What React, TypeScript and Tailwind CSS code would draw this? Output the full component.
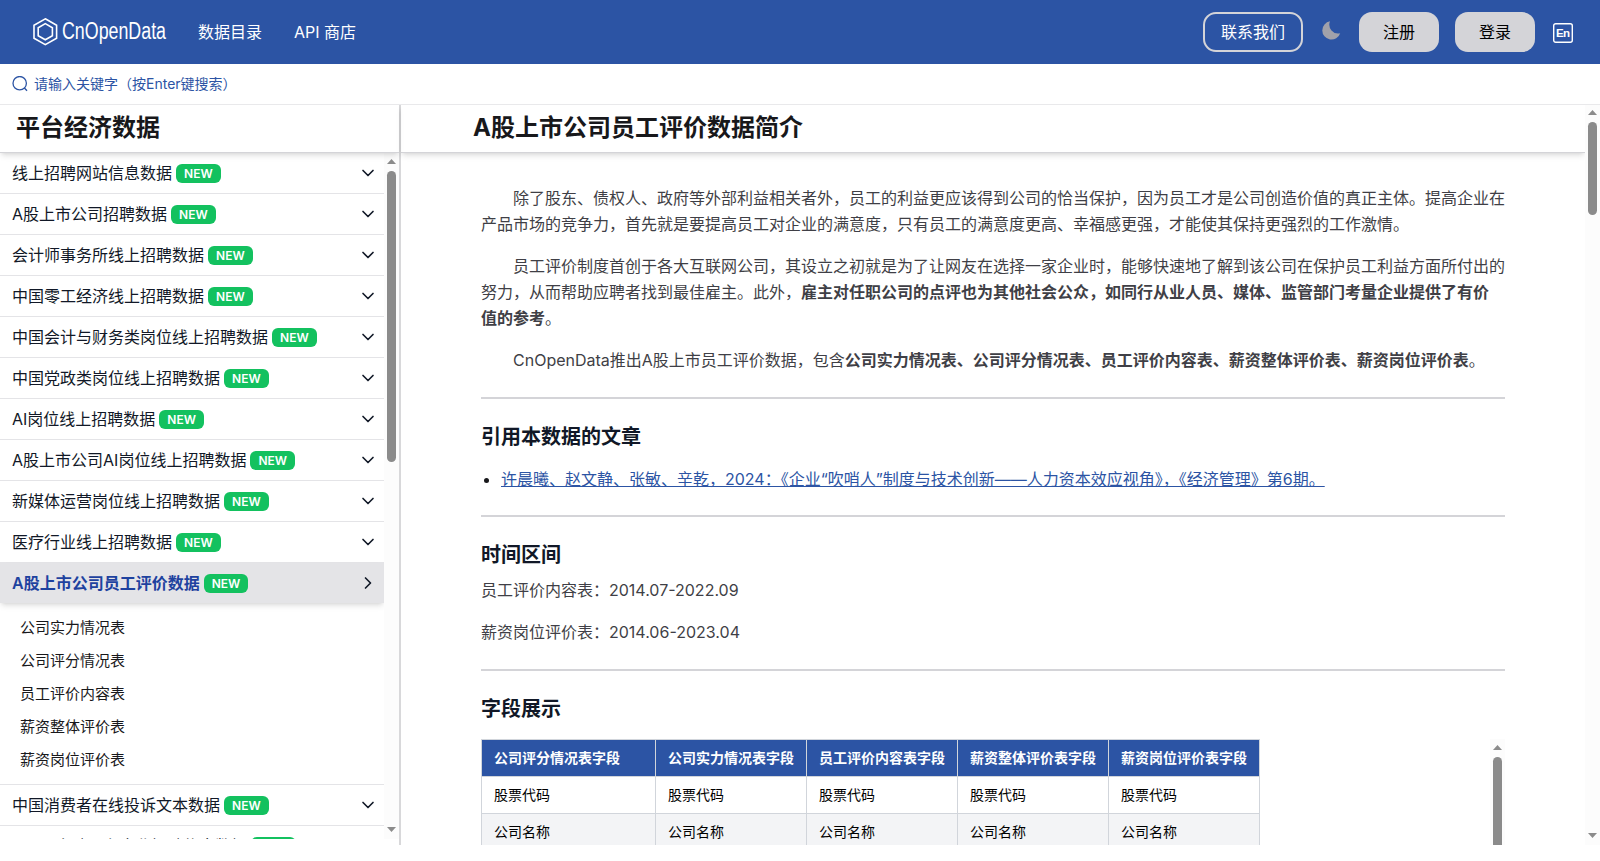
import React from "react";
import { clsx } from "clsx";
import { ChevronDown, ChevronRight } from "lucide-react";

interface Dataset {
  name: string;
  active?: boolean;
  tables?: string[];
}

const datasets: Dataset[] = [
  { name: "线上招聘网站信息数据" },
  { name: "A股上市公司招聘数据" },
  { name: "会计师事务所线上招聘数据" },
  { name: "中国零工经济线上招聘数据" },
  { name: "中国会计与财务类岗位线上招聘数据" },
  { name: "中国党政类岗位线上招聘数据" },
  { name: "AI岗位线上招聘数据" },
  { name: "A股上市公司AI岗位线上招聘数据" },
  { name: "新媒体运营岗位线上招聘数据" },
  { name: "医疗行业线上招聘数据" },
  {
    name: "A股上市公司员工评价数据",
    active: true,
    tables: ["公司实力情况表", "公司评分情况表", "员工评价内容表", "薪资整体评价表", "薪资岗位评价表"],
  },
  { name: "中国消费者在线投诉文本数据" },
  { name: "BOSS直聘平台企业招聘信息数据" },
];

const columns = ["公司评分情况表字段", "公司实力情况表字段", "员工评价内容表字段", "薪资整体评价表字段", "薪资岗位评价表字段"];
const rows = ["股票代码", "公司名称", "统计日期"];

const Logo: React.FC = () => (
  <svg width="136" height="32" viewBox="0 0 136 32" fill="none" aria-label="CnOpenData">
    <g stroke="#fff" strokeWidth="1.6">
      <path d="M13.3 2.8 24.6 9.2V22.2L13.3 28.6 2 22.2V9.2Z" />
      <path d="M13.3 7.6 20.4 11.7V19.7L13.3 23.8 6.2 19.7V11.7Z" />
    </g>
    <text
      x="30"
      y="23.2"
      fill="#fff"
      fontSize="23"
      fontFamily="Liberation Sans, sans-serif"
      textLength="104"
      lengthAdjust="spacingAndGlyphs"
    >
      CnOpenData
    </text>
  </svg>
);

const Scrollbar: React.FC<{ thumb: string; end?: boolean }> = ({ thumb, end = true }) => (
  <div className="flex w-[15px] shrink-0 flex-col items-center bg-[#fcfcfc]">
    <svg width="15" height="18" className="shrink-0" fill="#8b8b8b">
      <path d="M3 11 7.5 6 12 11Z" />
    </svg>
    <div className={clsx("w-[9px] rounded-full bg-[#8b8b8b]", thumb)} />
    {end && (
      <svg width="15" height="18" className="mt-auto shrink-0" fill="#8b8b8b">
        <path d="M3 6 7.5 11 12 6Z" />
      </svg>
    )}
  </div>
);

const Header: React.FC = () => (
  <header className="flex h-16 shrink-0 items-center bg-[#2c54a4] pl-8 pr-[27px] text-white">
    <Logo />
    <nav className="ml-[30px] flex gap-8">
      <a>数据目录</a>
      <a>API 商店</a>
    </nav>
    <div className="ml-auto flex items-center">
      <button className="h-10 w-[100px] rounded-[13px] border-2 border-[#d4d4d8]">联系我们</button>
      <svg width="19" height="19" viewBox="0 0 19 19" className="ml-[19px] -mt-1 fill-[#a1a1aa]">
        <path d="M8 .3A9.2 9.2 0 1 0 18.2 12.3 8.9 8.9 0 0 1 8 .3Z" />
      </svg>
      <button className="ml-[18px] h-10 w-20 rounded-[13px] bg-[#d4d4d8] text-black">注册</button>
      <button className="ml-4 h-10 w-20 rounded-[13px] bg-[#d4d4d8] text-black">登录</button>
      <svg width="20" height="20" viewBox="0 0 20 20" fill="none" className="ml-[18px] mt-px">
        <rect x="0.7" y="0.7" width="18.6" height="18.6" rx="2" stroke="#fff" strokeWidth="1.4" />
        <text x="3" y="14" fill="#fff" fontSize="11.5" fontWeight="700" fontFamily="Liberation Sans, sans-serif" textLength="14">
          En
        </text>
      </svg>
    </div>
  </header>
);

const Badge: React.FC = () => (
  <span className="ml-1 mt-px flex h-[19px] items-center rounded-md bg-[#13c15f] px-2 text-xs font-semibold text-white">NEW</span>
);

const Sidebar: React.FC = () => (
  <aside className="flex w-[401px] shrink-0 flex-col border-r-2 border-[#d8d8da]">
    <h2 className="z-10 h-[49px] shrink-0 border-b border-[#d4d4d8] pl-4 text-2xl leading-[48px] font-bold text-[#18181b] shadow-md">
      平台经济数据
    </h2>
    <div className="flex h-[686px]">
      <ul className="w-96 overflow-hidden">
        {datasets.map((item, i) => (
          <li key={item.name} className={clsx(i > 0 && "border-t border-[#e4e4e7]")}>
            <div
              className={clsx(
                "flex h-10 items-center pl-3 pr-1.5",
                item.active ? "bg-[#e4e4e7] font-semibold text-[#1e429f] shadow-md" : "text-[#111827]"
              )}
            >
              {item.name}
              <Badge />
              {item.active ? (
                <ChevronRight size={20} className="ml-auto text-[#111827]" />
              ) : (
                <ChevronDown size={20} className="ml-auto" />
              )}
            </div>
            {item.tables && (
              <ul className="py-2">
                {item.tables.map((table) => (
                  <li key={table} className="h-[33px] pl-5 text-[15px] leading-[33px] text-[#18181b]">
                    {table}
                  </li>
                ))}
              </ul>
            )}
          </li>
        ))}
      </ul>
      <Scrollbar thumb="h-[291px]" />
    </div>
  </aside>
);

const Section: React.FC<{ title: string; children: React.ReactNode }> = ({ title, children }) => (
  <section className="mt-6 border-t-2 border-[#d4d4d8] pt-[25px]">
    <h3 className="text-xl leading-[26px] font-semibold text-[#111827]">{title}</h3>
    {children}
  </section>
);

const FieldTable: React.FC = () => (
  <div className="mt-[17px] flex h-[400px] justify-between">
    <table className="h-fit border-collapse text-left text-sm text-black">
      <thead>
        <tr className="h-[37px] bg-[#2c54a4] text-white">
          {columns.map((col, i) => (
            <th key={col} className={clsx("border border-[#d1d5db] px-3 font-bold", i === 0 ? "w-[174px]" : "w-[151px]")}>
              {col}
            </th>
          ))}
        </tr>
      </thead>
      <tbody>
        {rows.map((row) => (
          <tr key={row} className="h-[37px] even:bg-[#f3f4f6]">
            {columns.map((col) => (
              <td key={col} className="border border-[#d1d5db] px-3">
                {row}
              </td>
            ))}
          </tr>
        ))}
      </tbody>
    </table>
    <Scrollbar thumb="h-[300px]" end={false} />
  </div>
);

const Article: React.FC = () => (
  <main className="flex min-w-0 flex-1">
    <div className="flex min-w-0 flex-1 flex-col">
      <h1 className="h-[49px] shrink-0 border-b border-[#d4d4d8] pl-[72px] text-2xl leading-[48px] font-bold text-[#18181b] shadow-md">
        A股上市公司员工评价数据简介
      </h1>
      <div className="overflow-hidden px-20 pt-8 leading-[26px] text-[#3f3f46]">
        <p className="mb-4 indent-8">
          除了股东、债权人、政府等外部利益相关者外，员工的利益更应该得到公司的恰当保护，因为员工才是公司创造价值的真正主体。提高企业在产品市场的竞争力，首先就是要提高员工对企业的满意度，只有员工的满意度更高、幸福感更强，才能使其保持更强烈的工作激情。
        </p>
        <p className="mb-4 indent-8">
          员工评价制度首创于各大互联网公司，其设立之初就是为了让网友在选择一家企业时，能够快速地了解到该公司在保护员工利益方面所付出的努力，从而帮助应聘者找到最佳雇主。此外，
          <strong>雇主对任职公司的点评也为其他社会公众，如同行从业人员、媒体、监管部门考量企业提供了有价值的参考</strong>。
        </p>
        <p className="indent-8">
          CnOpenData推出A股上市员工评价数据，包含
          <strong>公司实力情况表、公司评分情况表、员工评价内容表、薪资整体评价表、薪资岗位评价表</strong>。
        </p>
        <Section title="引用本数据的文章">
          <ul className="mt-[17px] list-disc pl-5 leading-6 text-[#18181b]">
            <li>
              <a className="text-[#2c54a4] underline">
                许晨曦、赵文静、张敏、辛乾，2024：《企业“吹哨人”制度与技术创新——人力资本效应视角》，《经济管理》第6期。
              </a>
            </li>
          </ul>
        </Section>
        <Section title="时间区间">
          <p className="mt-[9px]">员工评价内容表：2014.07-2022.09</p>
          <p className="mt-4">薪资岗位评价表：2014.06-2023.04</p>
        </Section>
        <Section title="字段展示">
          <FieldTable />
        </Section>
      </div>
    </div>
    <Scrollbar thumb="h-[93px]" />
  </main>
);

const App: React.FC = () => (
  <div
    lang="zh-CN"
    className="flex h-[861px] flex-col overflow-hidden bg-white font-['Inter','Noto_Sans_CJK_SC',sans-serif] text-base"
  >
    <Header />
    <div className="z-20 flex h-10 shrink-0 items-center pl-3 text-sm text-[#2c54a4] shadow-[0_1px_0_#e9e9eb]">
      <svg width="16" height="16" viewBox="0 0 16 16" fill="none" stroke="currentColor" strokeWidth="1.3" className="mr-1.5">
        <circle cx="7.7" cy="7.2" r="6.7" />
        <path d="m12.4 12 2.6 2.8" />
      </svg>
      请输入关键字（按Enter键搜索）
    </div>
    <div className="flex h-[741px] shrink-0 overflow-hidden">
      <Sidebar />
      <Article />
    </div>
  </div>
);

export default App;
